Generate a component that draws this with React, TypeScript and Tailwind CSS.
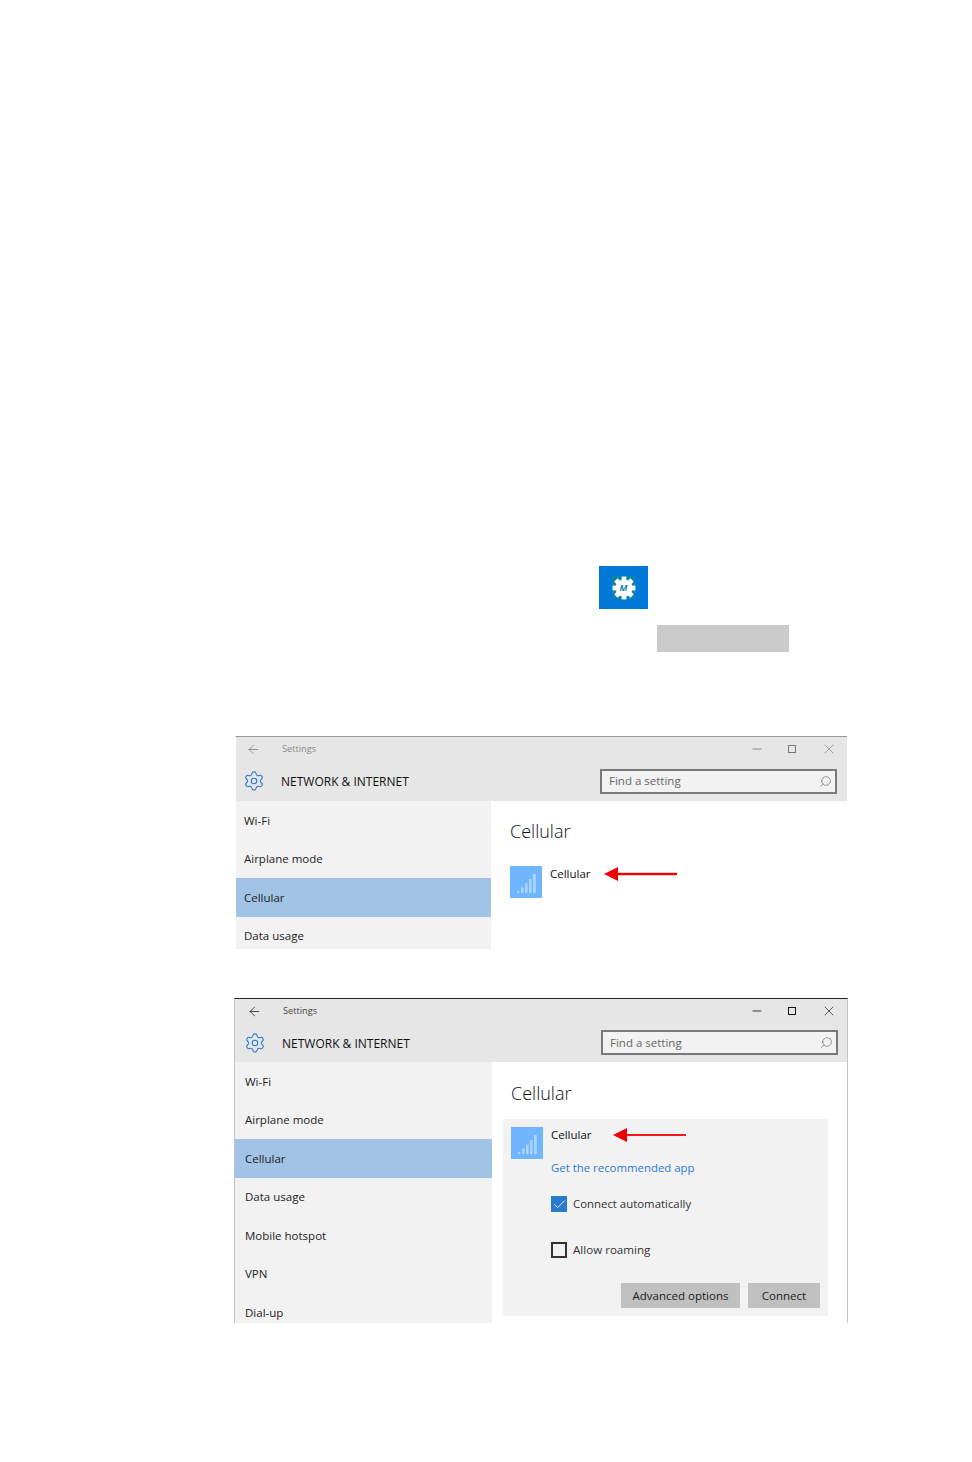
import { ArrowLeft, Minus, Search, Settings, X, Check } from "lucide-react";
import type { ReactNode } from "react";

const font = "font-['Open_Sans','Noto_Sans',sans-serif]";

function SignalTile() {
  return (
    <div className="w-[32px] h-[32px] shrink-0 bg-[#70b6ff]">
      <svg width="32" height="32" viewBox="0 0 32 32">
        <rect x="7" y="25" width="2.4" height="2" fill="#a8d4ff" />
        <rect x="11" y="21.5" width="2.6" height="5.5" fill="#a8d4ff" />
        <rect x="15" y="17.5" width="2.6" height="9.5" fill="#a8d4ff" />
        <rect x="19" y="13" width="2.6" height="14" fill="#a8d4ff" />
        <rect x="23" y="8" width="2.8" height="19" fill="#a8d4ff" />
      </svg>
    </div>
  );
}

function RedArrow({ className, bar }: { className: string; bar: number }) {
  return (
    <svg className={className} width="73" height="16" viewBox="0 0 73 16">
      <rect x="12" y={8 - bar / 2} width="61" height={bar} fill="#f00000" />
      <polygon points="0,8 14,1 14,15" fill="#f00000" />
    </svg>
  );
}

// gear with square teeth, as on the app tile
function AppGear() {
  return (
    <svg width="24" height="24" viewBox="0 0 24 24" className="absolute">
      <circle cx="12" cy="12" r="8.6" fill="#ffffff" />
      {[0, 45, 90, 135, 180, 225, 270, 315].map((deg) => (
        <rect key={deg} x="9.6" y="0.6" width="4.8" height="5" fill="#ffffff" transform={`rotate(${deg} 12 12)`} />
      ))}
    </svg>
  );
}

const navItems = ["Wi-Fi", "Airplane mode", "Cellular", "Data usage", "Mobile hotspot", "VPN", "Dial-up"];

function SettingsWindow({
  dim,
  children,
  items,
  windowClass,
  topClass,
  navClass,
  insetClass,
  searchPad,
}: {
  dim: boolean;
  children: ReactNode;
  items: string[];
  windowClass: string;
  topClass: string;
  navClass: string;
  insetClass: string;
  searchPad: string;
}) {
  const chrome = dim ? "text-[#777777]" : "text-[#111111]";
  return (
    <div className={`flex flex-col overflow-hidden ${windowClass}`}>
      <div className={`flex flex-col shrink-0 bg-[#e6e6e6] ${topClass}`}>
        <div className={`flex items-center h-[24px] shrink-0 ${insetClass}`}>
          <ArrowLeft className={`ml-[2px] ${chrome}`} size={15} strokeWidth={1.2} />
          <span className={`ml-[21px] text-[9.2px] ${dim ? "text-[#8a8a8a]" : "text-[#444444]"}`}>Settings</span>
          <div className={`ml-auto flex items-center mr-[10px] ${chrome}`}>
            <Minus size={14} strokeWidth={1.4} />
            <div className={`ml-[24px] w-[8px] h-[8px] border ${dim ? "border-[#777777]" : "border-[#111111]"}`} />
            <X className="ml-[25px]" size={16} strokeWidth={1} />
          </div>
        </div>
        <div className={`flex flex-1 items-center ${searchPad} ${insetClass}`}>
          <Settings size={22} strokeWidth={1.2} className="-ml-[1px] text-[#2a7bd0]" />
          <span className="ml-[16px] pt-[2px] text-[12px] text-[#111111]">NETWORK &amp; INTERNET</span>
          <div className="ml-auto flex items-center w-[237px] h-[25px] border-2 border-[#7a7a7a] bg-[#f2f2f2] pl-[7px] pr-[3px]">
            <span className="text-[11.5px] text-[#666666]">Find a setting</span>
            <Search size={13} strokeWidth={1.2} className="ml-auto -scale-x-100 text-[#666666]" />
          </div>
        </div>
      </div>
      <div className="flex flex-1 min-h-0">
        <div className={`flex flex-col shrink-0 overflow-hidden bg-[#f2f2f2] ${navClass}`}>
          {items.map((item) => (
            <div
              key={item}
              className={`flex items-center h-[38.5px] shrink-0 text-[11.5px] text-[#222222] ${insetClass} ${
                item === "Cellular" ? "bg-[#a1c3e6]" : ""
              }`}
            >
              {item}
            </div>
          ))}
        </div>
        <div className="flex-1 flex flex-col min-w-0">{children}</div>
      </div>
    </div>
  );
}

export default function App() {
  return (
    <div className={`w-[972px] h-[1462px] bg-white pt-[566px] ${font}`}>
      <div className="ml-[599px] w-[49px] h-[43px] flex items-center justify-center bg-[#0078d7]">
        <div className="relative w-[23px] h-[23px] flex items-center justify-center bg-[#0b84ad]">
          <AppGear />
          <span className="absolute italic font-bold text-[9px] leading-none text-[#0b84ad]">M</span>
        </div>
      </div>
      <div className="ml-[657px] mt-[16px] w-[132px] h-[27px] bg-[#cbcbcb]" />

      <SettingsWindow
        dim
        items={navItems.slice(0, 4)}
        windowClass="ml-[235px] mt-[84px] w-[612px] h-[213px] border-t border-t-[#999999] border-l border-l-white"
        topClass="h-[64px]"
        navClass="w-[255px]"
        insetClass="pl-[8px]"
        searchPad="pr-[10px]"
      >
        <div className="pl-[19px] pt-[16px] relative">
          <h2 className="text-[18px] font-light leading-[28px] text-[#111111]">Cellular</h2>
          <div className="flex mt-[21px]">
            <SignalTile />
            <span className="ml-[8px] text-[11.5px] leading-[16px] text-[#111111]">Cellular</span>
          </div>
          <RedArrow bar={2.4} className="absolute left-[113px] top-[65px]" />
        </div>
      </SettingsWindow>

      <SettingsWindow
        dim={false}
        items={navItems}
        windowClass="ml-[234px] mt-[49px] w-[614px] h-[325px] border-t border-t-[#222222] border-l border-r border-l-[#c4c4c4] border-r-[#c4c4c4]"
        topClass="h-[63px]"
        navClass="w-[257px]"
        insetClass="pl-[10px]"
        searchPad="pr-[9px]"
      >
        <div className="pl-[11px] pr-[19px] pt-[17px] relative">
          <h2 className="pl-[8px] text-[18px] font-light leading-[28px] text-[#111111]">Cellular</h2>
          <div className="mt-[12px] h-[197px] bg-[#f2f2f2] pt-[8px] pl-[8px] pr-[8px] flex flex-col">
            <div className="flex">
              <SignalTile />
              <span className="ml-[8px] text-[11.5px] leading-[16px] text-[#111111]">Cellular</span>
            </div>
            <a className="ml-[40px] mt-[1px] text-[11.4px] leading-[16px] text-[#2a7bd0]">Get the recommended app</a>
            <div className="ml-[40px] mt-[20px] flex items-center h-[16px]">
              <div className="w-[16px] h-[16px] flex items-center justify-center bg-[#2a7bd0]">
                <Check size={15} strokeWidth={1.3} className="text-white" />
              </div>
              <span className="ml-[6px] text-[11.4px] text-[#333333]">Connect automatically</span>
            </div>
            <div className="ml-[40px] mt-[30px] flex items-center h-[16px]">
              <div className="w-[16px] h-[16px] border-2 border-[#333333]" />
              <span className="ml-[6px] text-[11.6px] text-[#333333]">Allow roaming</span>
            </div>
            <div className="mt-[25px] flex justify-end gap-[8px]">
              <div className="w-[119px] h-[25px] flex items-center justify-center bg-[#c0c0c0] text-[11.5px] text-[#222222]">
                Advanced options
              </div>
              <div className="w-[72px] h-[25px] flex items-center justify-center bg-[#c0c0c0] text-[11.5px] text-[#222222]">
                Connect
              </div>
            </div>
          </div>
          <RedArrow bar={1.8} className="absolute left-[121px] top-[65px]" />
        </div>
      </SettingsWindow>
    </div>
  );
}
